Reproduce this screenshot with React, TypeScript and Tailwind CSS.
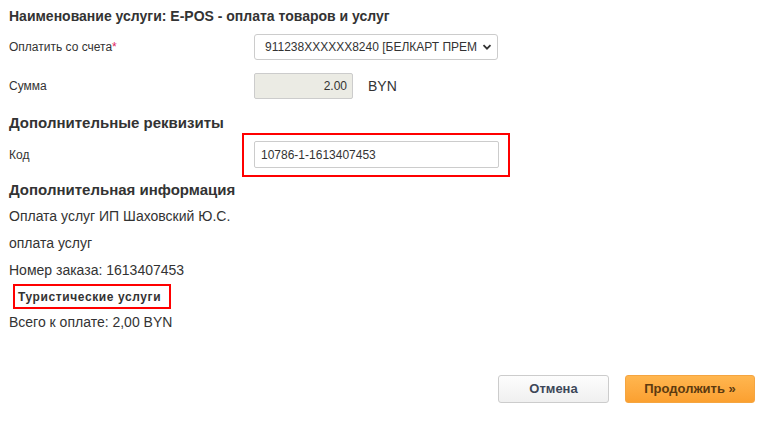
import React from "react";

export default function App() {
  return (
    <div className="relative w-[763px] h-[426px] bg-white pl-[9px] pt-[7px] font-['Liberation_Sans',Arial,sans-serif] text-[#333]">
      <h1 className="text-[14px] font-bold leading-[18px] text-[#333]">
        Наименование услуги: E-POS - оплата товаров и услуг
      </h1>

      <div className="mt-[9px] flex h-[26px] items-center">
        <div className="w-[245px] text-[12px]">
          Оплатить со счета<span className="text-[#e0245e]">*</span>
        </div>
        <div className="flex h-[26px] w-[244px] items-center rounded-[3px] border border-[#ccc] bg-white pl-[10px] pr-[5px]">
          <div className="flex-1 whitespace-nowrap text-[12px] text-[#333]">
            911238XXXXXX8240 [БЕЛКАРТ ПРЕМ
          </div>
          <svg width="10" height="10" viewBox="0 0 10 10" className="shrink-0">
            <path d="M1.5 3.2 L5 6.7 L8.5 3.2" fill="none" stroke="#333" strokeWidth="1.8" />
          </svg>
        </div>
      </div>

      <div className="mt-[13px] flex h-[26px] items-center">
        <div className="w-[245px] text-[12px]">Сумма</div>
        <div className="flex h-[26px] w-[99px] items-center justify-end rounded-[2px] border border-[#ccc] bg-[#ebebe4] pr-[5px] text-[12px] text-[#333]">
          2.00
        </div>
        <div className="ml-[15px] text-[14px] text-[#333]">BYN</div>
      </div>

      <h2 className="mt-[15px] text-[15px] font-bold leading-[18px] text-[#333]">
        Дополнительные реквизиты
      </h2>

      <div className="mt-[1px] flex items-center">
        <div className="w-[233px] text-[12px]">Код</div>
        <div className="border-2 border-[#ff0000] pb-[7px] pl-[10px] pr-[9px] pt-[6px]">
          <div className="flex h-[27px] w-[245px] items-center rounded-[2px] border border-[#ccc] bg-white pl-[6px] text-[12px] text-[#333]">
            10786-1-1613407453
          </div>
        </div>
      </div>

      <h2 className="mt-[4px] text-[15px] font-bold leading-[18px] text-[#333]">
        Дополнительная информация
      </h2>

      <div className="mt-[4px] text-[14px] leading-[27px] text-[#333]">
        <div>Оплата услуг ИП Шаховский Ю.С.</div>
        <div>оплата услуг</div>
        <div>Номер заказа: 1613407453</div>
      </div>
      <div className="ml-[4px] flex h-[25px] w-[158px] items-center border-2 border-[#ff0000] pl-[3px] text-[12px] font-bold tracking-[0.6px] text-[#333]">
        Туристические услуги
      </div>
      <div className="text-[14px] leading-[27px] text-[#333]">Всего к оплате: 2,00 BYN</div>

      <div className="mt-[39px] flex justify-end pr-[8px]">
        <button className="flex h-[28px] w-[111px] items-center justify-center rounded-[3px] border border-[#ccc] bg-gradient-to-b from-[#fdfdfd] to-[#f0f0f0] text-[13px] font-bold text-[#3d4758]">
          Отмена
        </button>
        <button className="ml-[16px] flex h-[28px] w-[130px] items-center justify-center rounded-[3px] border border-[#f5a540] bg-gradient-to-b from-[#ffb64f] to-[#fba030] text-[13px] font-bold text-[#5c3a10]">
          Продолжить »
        </button>
      </div>
    </div>
  );
}
